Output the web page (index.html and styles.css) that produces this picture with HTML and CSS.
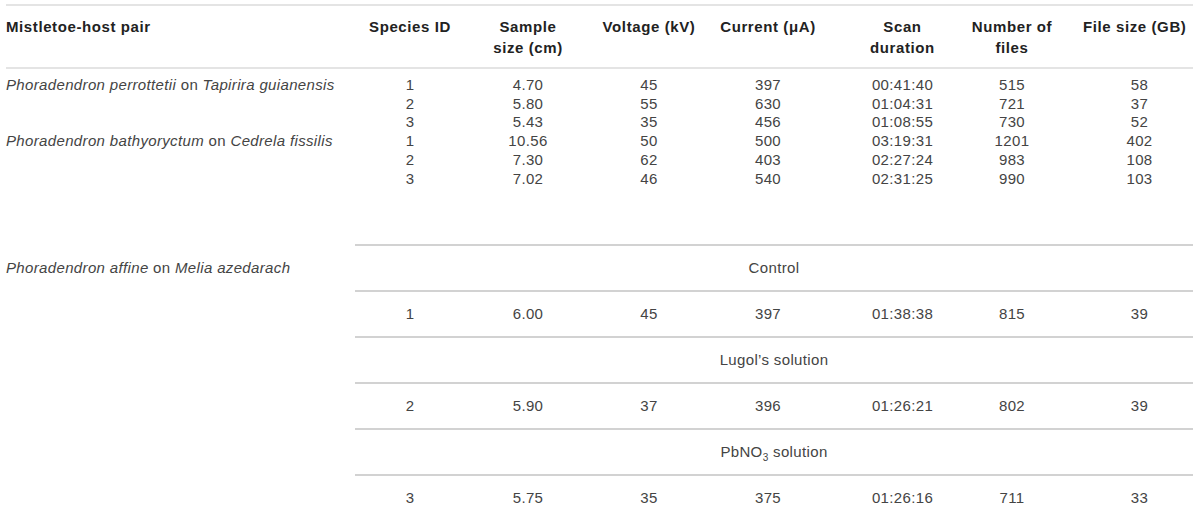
FILE: index.html
```html
<!DOCTYPE html>
<html lang="en">
<head>
  <meta charset="UTF-8" />
  <title>Micro-CT scan parameters</title>
  <link rel="stylesheet" href="styles.css">
</head>
<body>
  <table class="scans">
    <colgroup>
      <col class="c-pair"><col class="c-id"><col class="c-size"><col class="c-volt">
      <col class="c-cur"><col class="c-dur"><col class="c-files"><col class="c-gb">
    </colgroup>
    <thead>
      <tr>
        <th class="pair">Mistletoe-host pair</th>
        <th>Species ID</th>
        <th>Sample<br>size (cm)</th>
        <th>Voltage (kV)</th>
        <th>Current (&mu;A)</th>
        <th class="dur">Scan<br>duration</th>
        <th>Number of<br>files</th>
        <th class="gb">File size (GB)</th>
      </tr>
    </thead>
    <tbody class="plain">
      <tr class="first">
        <td class="pair"><i>Phoradendron perrottetii</i> on <i>Tapirira guianensis</i></td>
        <td>1</td><td>4.70</td><td>45</td><td>397</td><td class="dur">00:41:40</td><td>515</td><td class="gb">58</td>
      </tr>
      <tr>
        <td class="pair"></td>
        <td>2</td><td>5.80</td><td>55</td><td>630</td><td class="dur">01:04:31</td><td>721</td><td class="gb">37</td>
      </tr>
      <tr>
        <td class="pair"></td>
        <td>3</td><td>5.43</td><td>35</td><td>456</td><td class="dur">01:08:55</td><td>730</td><td class="gb">52</td>
      </tr>
      <tr>
        <td class="pair"><i>Phoradendron bathyoryctum</i> on <i>Cedrela fissilis</i></td>
        <td>1</td><td>10.56</td><td>50</td><td>500</td><td class="dur">03:19:31</td><td>1201</td><td class="gb">402</td>
      </tr>
      <tr>
        <td class="pair"></td>
        <td>2</td><td>7.30</td><td>62</td><td>403</td><td class="dur">02:27:24</td><td>983</td><td class="gb">108</td>
      </tr>
      <tr>
        <td class="pair"></td>
        <td>3</td><td>7.02</td><td>46</td><td>540</td><td class="dur">02:31:25</td><td>990</td><td class="gb">103</td>
      </tr>
      <tr class="gap"><td colspan="8"></td></tr>
    </tbody>
    <tbody class="treat">
      <tr class="label">
        <td class="pair"><i>Phoradendron affine</i> on <i>Melia azedarach</i></td>
        <td colspan="7">Control</td>
      </tr>
      <tr>
        <td class="pair"></td>
        <td>1</td><td>6.00</td><td>45</td><td>397</td><td class="dur">01:38:38</td><td>815</td><td class="gb">39</td>
      </tr>
      <tr class="label">
        <td class="pair"></td>
        <td colspan="7">Lugol’s solution</td>
      </tr>
      <tr>
        <td class="pair"></td>
        <td>2</td><td>5.90</td><td>37</td><td>396</td><td class="dur">01:26:21</td><td>802</td><td class="gb">39</td>
      </tr>
      <tr class="label">
        <td class="pair"></td>
        <td colspan="7">PbNO<sub>3</sub> solution</td>
      </tr>
      <tr>
        <td class="pair"></td>
        <td>3</td><td>5.75</td><td>35</td><td>375</td><td class="dur">01:26:16</td><td>711</td><td class="gb">33</td>
      </tr>
    </tbody>
  </table>
</body>
</html>
```

FILE: styles.css
```css
body { margin: 0; padding: 4px 7px 0 6px; background: #fff; font-family: "Liberation Sans", Arial, sans-serif; font-size: 15px; letter-spacing: 0.35px; color: #444; }
.scans { width: 1187px; border-collapse: collapse; table-layout: fixed; border-top: 2px solid #e4e4e4; }
.c-pair { width: 349px; }
.c-id { width: 110px; }
.c-size { width: 126px; }
.c-volt { width: 116px; }
.c-cur { width: 122px; }
.c-dur { width: 131px; }
.c-files { width: 104px; }
.c-gb { width: 129px; }
th, td { padding: 0; text-align: center; font-weight: normal; white-space: nowrap; }
th { font-weight: bold; color: #222; letter-spacing: 0.6px; line-height: 21px; vertical-align: top; padding: 10px 0 9px; border-bottom: 2px solid #e4e4e4; }
th.pair, td.pair { text-align: left; }
th.dur, td.dur { padding-left: 16px; }
td.gb { padding-left: 22px; }
th.gb { padding-left: 19px; text-align: left; }
.plain td { line-height: 18.7px; }
.plain tr.first td { padding-top: 7px; }
.plain tr.gap td { height: 56px; }
.treat td { height: 44px; line-height: 18px; }
.treat td.pair { border-top: none; }
.treat td + td, .treat td[colspan] { border-top: 2px solid #d2d2d2; }
sub { font-size: 10px; line-height: 0; }
```
